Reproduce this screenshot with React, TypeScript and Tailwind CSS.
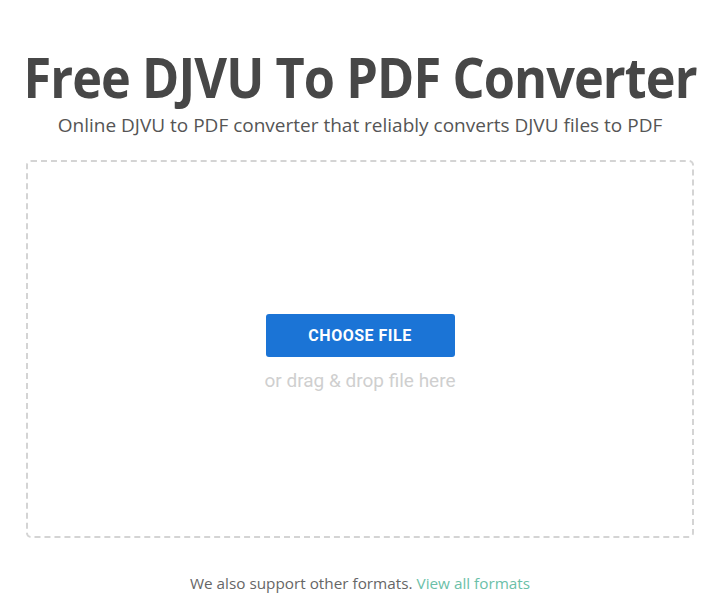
export default function App() {
  return (
    <div className="w-[720px] h-[606px] bg-white flex flex-col items-center" style={{ fontFamily: '"Open Sans", sans-serif' }}>
      <h1 className="mt-[44px] text-[56px] leading-[64px] font-bold text-[#474747] tracking-[-1px] whitespace-nowrap scale-x-[0.9]">Free DJVU To PDF Converter</h1>
      <p className="mt-[5px] text-[19px] leading-[24px] text-[#555] whitespace-nowrap">Online DJVU to PDF converter that reliably converts DJVU files to PDF</p>
      <div className="mt-[23px] w-[668px] h-[378px] shrink-0 border-2 border-dashed border-[#d4d4d4] rounded-[5px] flex flex-col items-center pt-[152px]">
        <button className="w-[189px] h-[43px] rounded-[3px] bg-[#1b74d6] text-white text-[16px] font-bold tracking-[0.5px]" style={{ fontFamily: 'Roboto, sans-serif' }}>CHOOSE FILE</button>
        <div className="mt-[12px] text-[19px] leading-[24px] text-[#cfcfcf]" style={{ fontFamily: 'Roboto, sans-serif' }}>or drag &amp; drop file here</div>
      </div>
      <p className="mt-[38px] text-[15.3px] leading-[15px] text-[#666] whitespace-nowrap">We also support other formats. <span className="text-[#6bbfa8]">View all formats</span></p>
    </div>
  );
}
